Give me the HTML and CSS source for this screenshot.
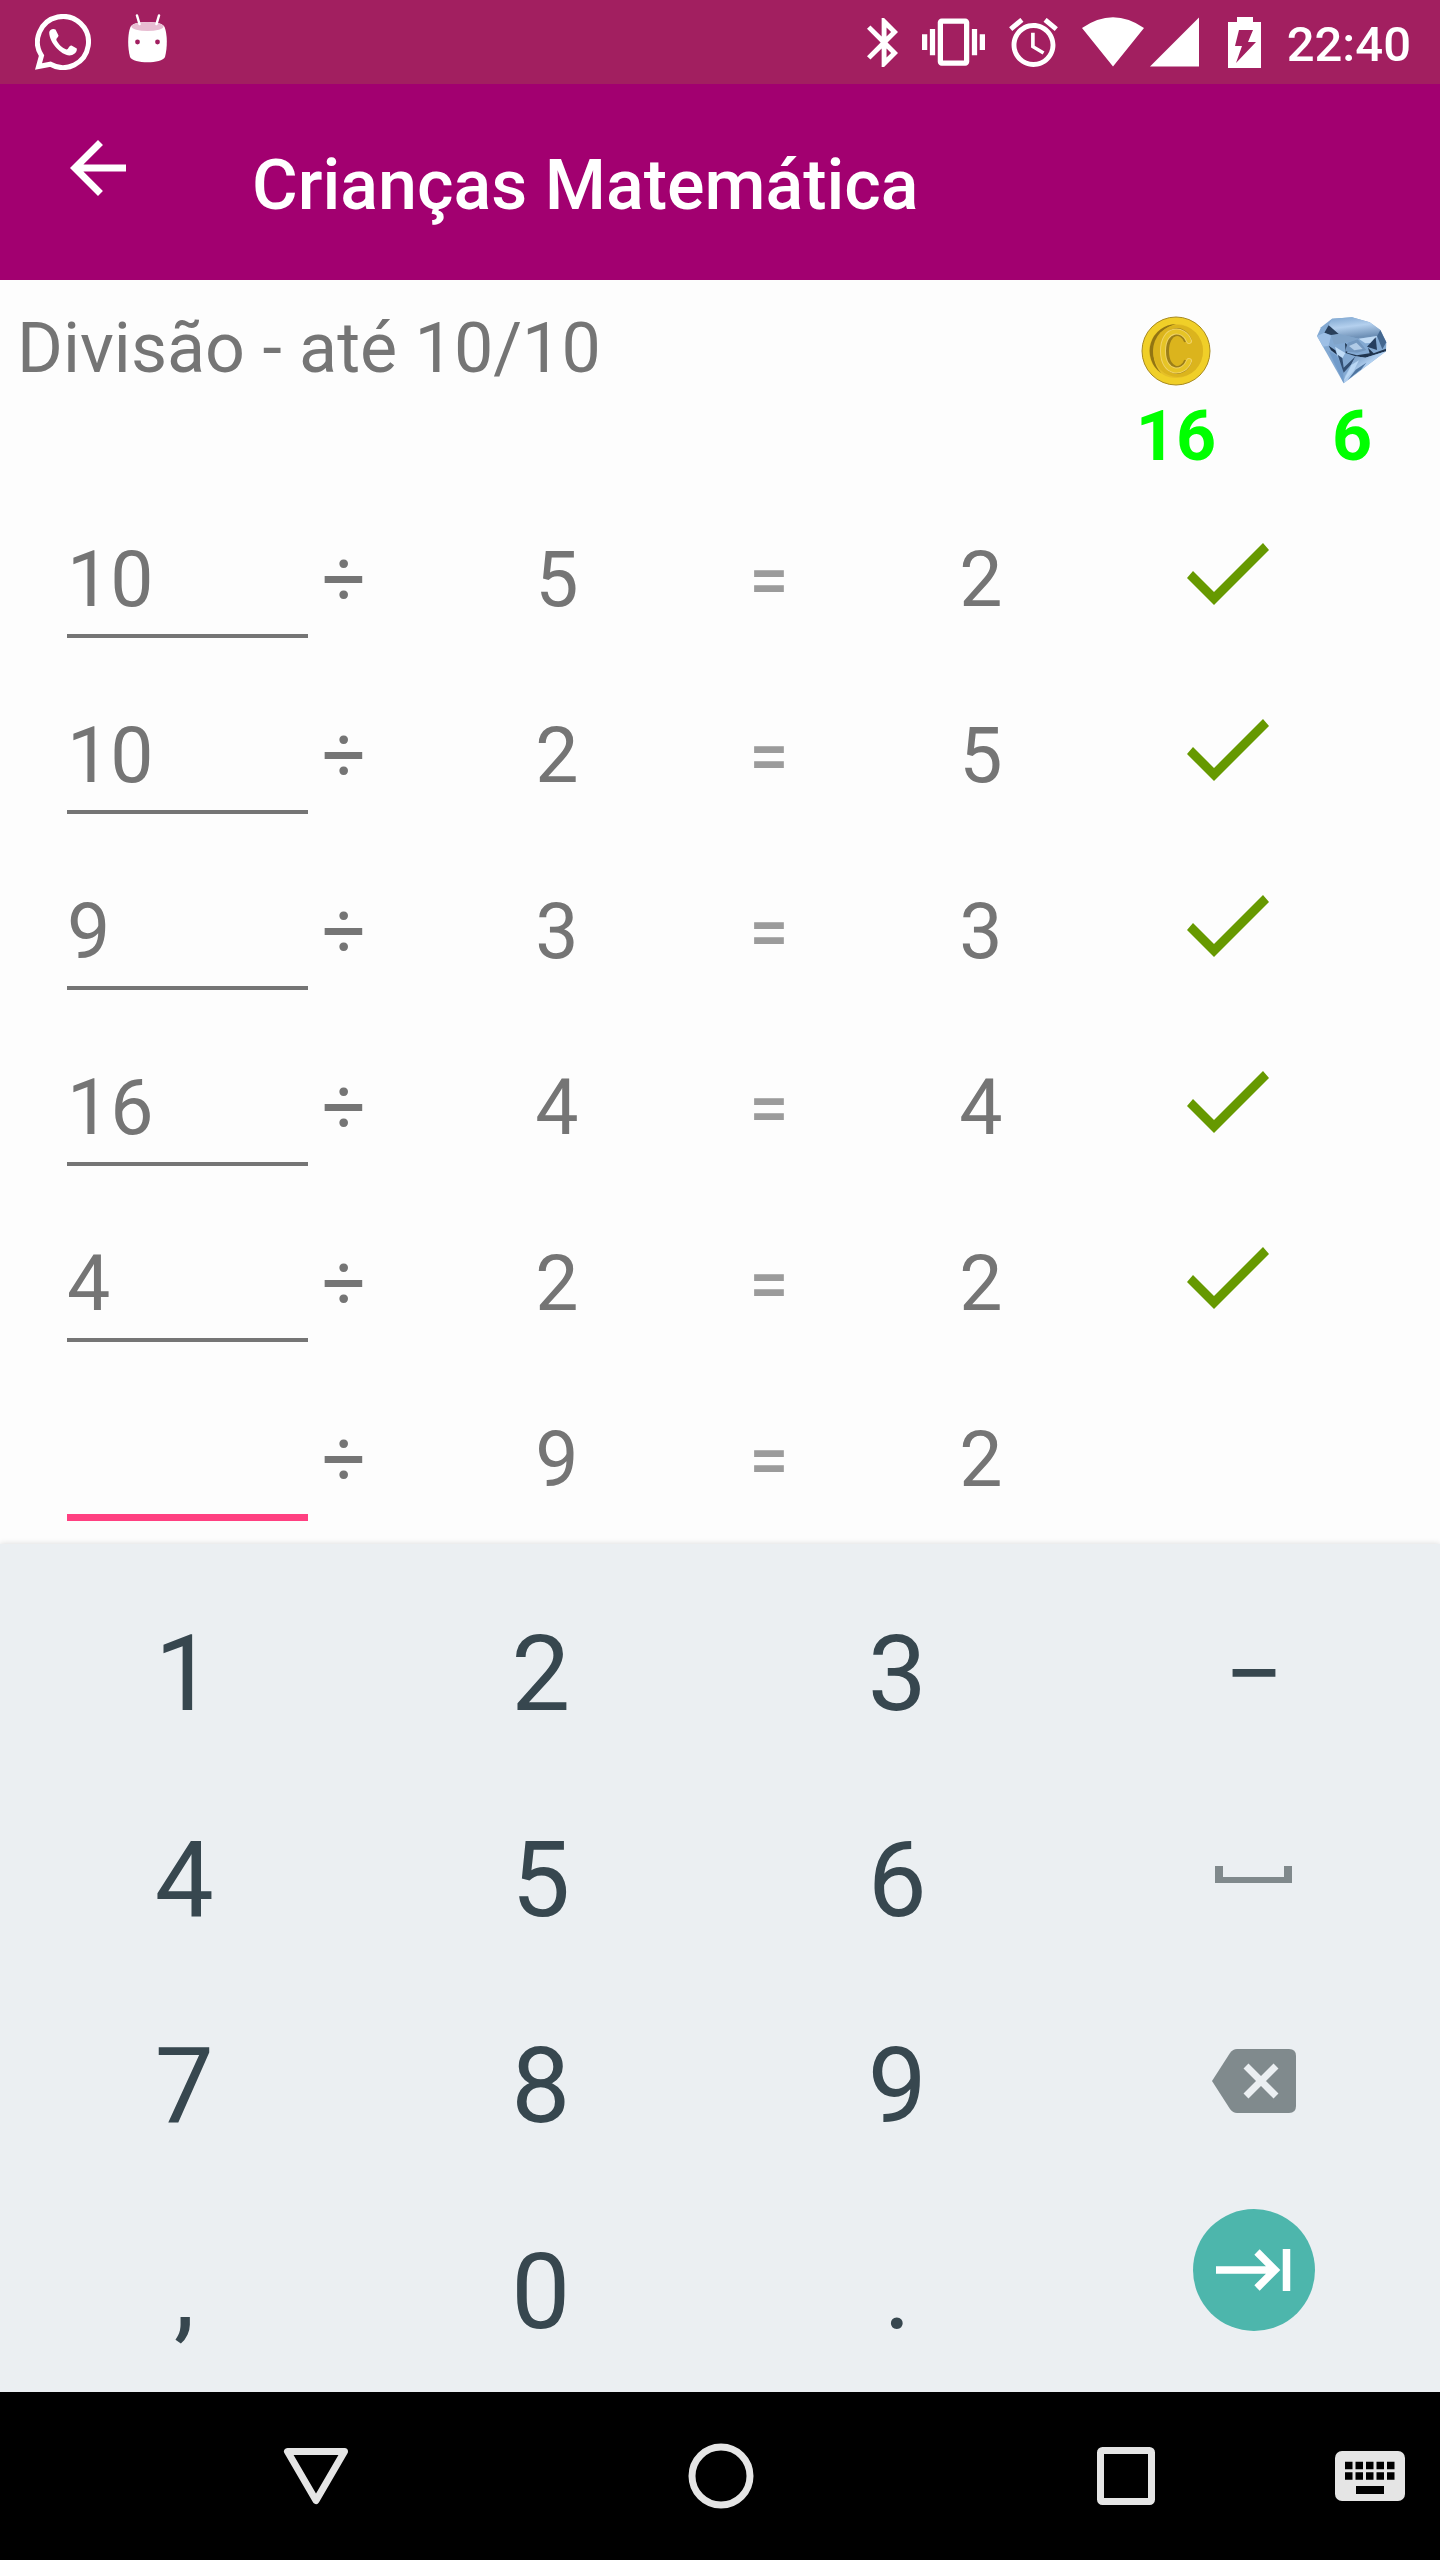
FILE: index.html
```html
<!DOCTYPE html>
<html lang="pt">
<head>
    <meta charset="UTF-8">
    <meta name="viewport" content="width=device-width, initial-scale=1.0">
    <title>Crianças Matemática</title>
    <link rel="stylesheet" href="styles.css">
</head>
<body>
    <div class="status-bar">
        <div class="status-left">
            <svg width="56" height="56" viewBox="0 0 56 56">
                <path d="M6.5 41.7A25.5 25.5 0 1 1 15.5 50.2L3.5 52.5z" fill="none" stroke="#fff" stroke-width="5"/>
                <path d="M14.2 18.5C14.500 15.500 18 14 20.500 15.500L23.500 21.500C23.500 23.500 21 24 21.300 26C24 31 27 33.500 31.500 35.500C33.500 35.500 34 31 36.500 31.500L41.800 34.500C42.500 38.500 38 41.500 34.500 41.500C26 41 14.500 29 14.200 18.500z" fill="#fff"/>
            </svg>
            <svg class="android" width="41" height="49" viewBox="0 0 41 49">
                <path d="M4 12C8 6.500 33 6.500 37 12C40 17 41 32 38 43C35 50 6 50 3 43C0 32 1 17 4 12z" fill="#fff"/>
                <ellipse cx="20.500" cy="12.500" rx="16" ry="4.500" fill="#e8bdd2"/>
                <path d="M10 1.500L12.500 10M32 1.500L29.500 10" stroke="#fff" stroke-width="2.500" stroke-linecap="round"/>
                <circle cx="10.500" cy="28" r="2.400" fill="#a21f60"/>
                <circle cx="30.500" cy="28" r="2.400" fill="#a21f60"/>
            </svg>
        </div>
        <div class="status-right">
            <svg width="31" height="49" viewBox="5 2 12.7 20" fill="#fff"><path d="M17.710 7.710L12 2h-1v7.590L6.410 5 5 6.410 10.590 12 5 17.590 6.410 19 11 14.410V22h1l5.710-5.710-4.300-4.290 4.300-4.290zM13 5.830l1.880 1.880L13 9.590V5.830zm1.880 10.460L13 18.170v-3.760l1.880 1.880z"/></svg>
            <svg width="63" height="48" viewBox="0 3 24 18" fill="#fff"><path d="M0 15h2V9H0v6zm3 2h2V7H3v10zm19-8v6h2V9h-2zm-3 8h2V7h-2v10zM16.500 3h-9C6.670 3 6 3.670 6 4.500v15c0 .83.67 1.500 1.500 1.500h9c.83 0 1.500-.67 1.500-1.500v-15c0-.83-.67-1.500-1.500-1.500zM16 19H8V5h8v14z"/></svg>
            <svg width="49" height="49" viewBox="2 1.900 20 20.100" fill="#fff"><path d="M22 5.720l-4.600-3.860-1.290 1.530 4.600 3.860L22 5.720zM7.880 3.390L6.600 1.860 2 5.710l1.290 1.530 4.590-3.850zM12.500 8H11v6l4.750 2.850.75-1.230-4-2.370V8zM12 4c-4.970 0-9 4.030-9 9s4.020 9 9 9c4.970 0 9-4.030 9-9s-4.030-9-9-9zm0 16c-3.870 0-7-3.130-7-7s3.130-7 7-7 7 3.130 7 7-3.130 7-7 7z"/></svg>
            <svg width="118" height="50" viewBox="0 0 118 50" fill="#fff"><path d="M0 11Q31-10.500 62 11L31 49.500zM68 49.500L117 .5V49.500z"/></svg>
            <svg width="39" height="51" viewBox="0 0 39 51"><path d="M13 0H29V5H37V51H4V5H13z" fill="#fff"/><path d="M15 13H29L24 25H32L12 46L18 29H11z" fill="#a21f60"/></svg>
            <span class="clock">22:40</span>
        </div>
    </div>

    <header class="app-bar">
        <button class="back-btn" aria-label="Voltar">
            <svg width="84" height="84" viewBox="0 0 24 24" fill="#fff"><path d="M20 11H7.830l5.590-5.590L12 4l-8 8 8 8 1.410-1.410L7.830 13H20v-2z"/></svg>
        </button>
        <h1>Crianças Matemática</h1>
    </header>

    <main>
        <div class="info">
            <h2>Divisão - até 10/10</h2>
            <div class="score">
                <svg width="70" height="70" viewBox="0 0 70 70">
                    <circle cx="35" cy="35" r="34" fill="#f0cf28" stroke="#a88a20" stroke-width="1"/>
                    <circle cx="35" cy="35" r="27" fill="#e5bf28"/>
                    <path d="M35 8A27 27 0 0 0 20 57A30 30 0 0 1 35 8z" fill="#927512"/>
                    <ellipse cx="37" cy="35" rx="25" ry="26" fill="#dbb41d"/>
                    <path d="M47 25C42 11 24 13 24 35S42 59 47 45" fill="none" stroke="#9c7f18" stroke-width="8"/>
                    <path d="M48 25C43 11 22 11 22 35S43 59 48 45" fill="none" stroke="#f0d267" stroke-width="6" stroke-linecap="round"/>
                    <path d="M48 25C43 11 22 11 22 35S43 59 48 45" fill="none" stroke="#e6c426" stroke-width="4" stroke-linecap="round"/>
                </svg>
                <span>16</span>
            </div>
            <div class="score">
                <svg width="70" height="70" viewBox="0 -4 210 210">
                    <defs>
                        <linearGradient id="top" x1="0" y1="0" x2="0.300" y2="1"><stop offset="0" stop-color="#7da5cf"/><stop offset="0.500" stop-color="#b4d0ee"/><stop offset="1" stop-color="#6f91b7"/></linearGradient>
                        <linearGradient id="side" x1="0" y1="0" x2="1" y2="1"><stop offset="0" stop-color="#527ba8"/><stop offset="0.500" stop-color="#b4d2f2"/><stop offset="1" stop-color="#5981ac"/></linearGradient>
                    </defs>
                    <path d="M45 4L105 0L158 15L190 38L208 75L207 102L80 198L18 88L0 56L12 30z" fill="#83a9d2"/>
                    <path d="M45 4L105 0L158 15L190 38L180 56L125 64L65 50L35 24z" fill="url(#top)"/>
                    <path d="M35 24L65 50L42 53L22 46z" fill="#293f5a"/>
                    <path d="M0 56L22 46L42 55L35 85L18 88z" fill="#9dbfe5"/>
                    <path d="M42 55L65 50L125 64L85 76L52 82z" fill="#81a4c9"/>
                    <path d="M125 64L180 56L172 76L145 78z" fill="#c0daf4"/>
                    <path d="M180 56L190 38L208 75L196 96z" fill="#44678f"/>
                    <path d="M176 60L180 98L150 88z" fill="#263e5e"/>
                    <path d="M84 76L96 88L90 106L120 114L158 108L153 91L170 108L207 94L207 102L145 121L116 117L86 107z" fill="#20354f"/>
                    <path d="M92 76L122 66L148 98L120 106L84 102z" fill="#7397bf"/>
                    <path d="M96 86L118 76L137 95L112 99z" fill="#b1cbe7"/>
                    <path d="M35 85L55 99L60 112L42 99z" fill="#1d304a"/>
                    <path d="M54 88L85 107L76 123L62 116z" fill="#c0dcf7"/>
                    <path d="M35 100L58 114L78 151L80 198z" fill="#719bca"/>
                    <path d="M62 112L76 122L80 151L116 117L103 141L80 166z" fill="#334f73"/>
                    <path d="M116 117L145 121L207 102L80 198L84 176z" fill="url(#side)"/>
                    <path d="M103 143L126 129L110 160L80 190z" fill="#b9d7f5"/>
                    <path d="M116 157L148 136L133 156L92 188z" fill="#4e749f"/>
                </svg>
                <span>6</span>
            </div>
        </div>

        <div class="questions">
            <div class="question">
                <input type="text" inputmode="numeric" aria-label="Resposta 1" value="10">
                <span class="operator">÷</span><span>5</span><span class="equals">=</span><span>2</span>
                <svg class="check" viewBox="0 0 82 62"><path d="M0 35L6 28L27 49L76 0L82 7L27 62z" fill="#690"/></svg>
            </div>
            <div class="question">
                <input type="text" inputmode="numeric" aria-label="Resposta 2" value="10">
                <span class="operator">÷</span><span>2</span><span class="equals">=</span><span>5</span>
                <svg class="check" viewBox="0 0 82 62"><path d="M0 35L6 28L27 49L76 0L82 7L27 62z" fill="#690"/></svg>
            </div>
            <div class="question">
                <input type="text" inputmode="numeric" aria-label="Resposta 3" value="9">
                <span class="operator">÷</span><span>3</span><span class="equals">=</span><span>3</span>
                <svg class="check" viewBox="0 0 82 62"><path d="M0 35L6 28L27 49L76 0L82 7L27 62z" fill="#690"/></svg>
            </div>
            <div class="question">
                <input type="text" inputmode="numeric" aria-label="Resposta 4" value="16">
                <span class="operator">÷</span><span>4</span><span class="equals">=</span><span>4</span>
                <svg class="check" viewBox="0 0 82 62"><path d="M0 35L6 28L27 49L76 0L82 7L27 62z" fill="#690"/></svg>
            </div>
            <div class="question">
                <input type="text" inputmode="numeric" aria-label="Resposta 5" value="4">
                <span class="operator">÷</span><span>2</span><span class="equals">=</span><span>2</span>
                <svg class="check" viewBox="0 0 82 62"><path d="M0 35L6 28L27 49L76 0L82 7L27 62z" fill="#690"/></svg>
            </div>
            <div class="question">
                <input class="active" type="text" inputmode="numeric" aria-label="Resposta 6">
                <span class="operator">÷</span><span>9</span><span class="equals">=</span><span>2</span>
            </div>
        </div>
    </main>

    <div class="keyboard">
        <button>1</button>
        <button>2</button>
        <button>3</button>
        <button>−</button>
        <button>4</button>
        <button>5</button>
        <button>6</button>
        <button class="icon-key" aria-label="Espaço">
            <svg width="78" height="18" viewBox="0 0 78 18"><path d="M0 0H8V11H69V0H77V17H0z" fill="#80898c"/></svg>
        </button>
        <button>7</button>
        <button>8</button>
        <button>9</button>
        <button class="icon-key" aria-label="Apagar">
            <svg width="84" height="64" viewBox="0 0 84 64"><path d="M0 32L18 4Q21 0 25 0H77Q84 0 84 7V57Q84 64 77 64H25Q21 64 18 60z" fill="#808a8d"/><path d="M34 17L64 47M64 17L34 47" stroke="#ebeff2" stroke-width="7"/></svg>
        </button>
        <button>,</button>
        <button>0</button>
        <button>.</button>
        <button class="next-key" aria-label="Próximo">
            <svg width="122" height="122" viewBox="0 0 122 122"><circle cx="61" cy="61" r="61" fill="#4db6ac"/><path d="M23 61H80M64 43L82 61L64 79M93.500 40V82" fill="none" stroke="#fff" stroke-width="7.500"/></svg>
        </button>
    </div>

    <nav class="nav-bar">
        <button aria-label="Fechar teclado">
            <svg width="66" height="66" viewBox="0 0 66 66"><path d="M4.500 8.500H61.500L33 57.500z" fill="none" stroke="#e5e5e5" stroke-width="7" stroke-linejoin="round"/></svg>
        </button>
        <button aria-label="Início">
            <svg width="66" height="66" viewBox="0 0 66 66"><circle cx="33" cy="33" r="29" fill="none" stroke="#e5e5e5" stroke-width="7"/></svg>
        </button>
        <button aria-label="Recentes">
            <svg width="66" height="66" viewBox="0 0 66 66"><rect x="7.500" y="7.500" width="51" height="51" rx="2" fill="none" stroke="#e5e5e5" stroke-width="7"/></svg>
        </button>
        <button class="ime-btn" aria-label="Trocar teclado">
            <svg width="70" height="50" viewBox="0 0 70 50">
                <rect width="70" height="50" rx="7" fill="#e5e5e5"/>
                <path d="M10 14.500H60M10 25H60" stroke="#000" stroke-width="7.500" stroke-dasharray="7.500 3"/>
                <path d="M21 39H49" stroke="#000" stroke-width="8"/>
            </svg>
        </button>
    </nav>
</body>
</html>
```
FILE: styles.css
```css
* {
    box-sizing: border-box;
}

body {
    font-family: Roboto, sans-serif;
    background: #fdfdfd;
    color: #757575;
    margin: 0;
    min-height: 100vh;
    display: flex;
    flex-direction: column;
}

button {
    font-family: inherit;
    background: none;
    border: none;
    padding: 0;
    cursor: pointer;
    display: flex;
    justify-content: center;
    align-items: center;
}

svg {
    display: block;
}

.status-bar {
    background: #a21f60;
    color: white;
    height: 84px;
    padding: 0 29px 0 35px;
    display: flex;
    justify-content: space-between;
    align-items: center;
}

.status-left,
.status-right {
    display: flex;
    align-items: center;
}

.status-left {
    gap: 36px;
}

.android {
    margin-bottom: 8px;
}

.status-right {
    gap: 24px;
}

.clock {
    font-size: 49px;
    font-weight: 500;
    padding-top: 4px;
}

.app-bar {
    background: #a20070;
    height: 196px;
    padding: 0 56px;
    display: flex;
    align-items: center;
    gap: 112px;
}

.back-btn {
    padding-bottom: 28px;
}

h1 {
    color: white;
    font-size: 70px;
    font-weight: 500;
    margin: 0;
    padding-top: 6px;
}

main {
    flex: 1;
}

.info {
    display: grid;
    grid-template-columns: 1fr 176px 176px;
    height: 208px;
}

h2 {
    font-size: 70px;
    font-weight: 400;
    line-height: 84px;
    margin: 0;
    padding: 26px 0 0 17px;
}

.score {
    display: flex;
    flex-direction: column;
    align-items: center;
    gap: 8px;
    padding-top: 36px;
    color: #00ff00;
    font-size: 70px;
    font-weight: 700;
    line-height: 84px;
}

.question {
    display: grid;
    grid-template-columns: 308fr 143fr 212fr 212fr 212fr 282fr 71fr;
    align-items: start;
    height: 176px;
    padding-top: 47px;
    font-size: 77px;
    line-height: 90px;
    text-align: center;
}

.question input {
    width: auto;
    min-width: 0;
    height: 103px;
    margin-left: 67px;
    padding: 0 0 9px;
    border: none;
    border-bottom: 4px solid #757575;
    border-radius: 0;
    background: none;
    color: inherit;
    font: inherit;
    outline: none;
}

.question .active {
    height: 106px;
    border-bottom: 7px solid #ff4081;
}

.operator {
    padding-left: 14px;
    text-align: left;
}

.equals {
    color: #9b9b9b;
    font-size: 70px;
    font-weight: 500;
}

.check {
    width: 82px;
    height: 62px;
    margin-top: 8px;
    justify-self: center;
}

.keyboard {
    background: #ebeff2;
    box-shadow: 0 0 6px rgba(0, 0, 0, 0.15);
    display: grid;
    grid-template-columns: repeat(4, 1fr);
    grid-auto-rows: 206px;
    padding: 24px 8px 0 6px;
}

.keyboard button {
    color: #37474f;
    font-size: 105px;
    padding-top: 6px;
}

.keyboard .icon-key {
    padding: 0 0 4px;
}

.keyboard .next-key {
    padding: 0 0 38px;
}

.nav-bar {
    background: #000;
    height: 168px;
    display: grid;
    grid-template-columns: 113fr 405fr 405fr 405fr 112fr;
}

.nav-bar button:first-child {
    grid-column: 2;
}

.nav-bar .ime-btn {
    padding-right: 28px;
}
```
